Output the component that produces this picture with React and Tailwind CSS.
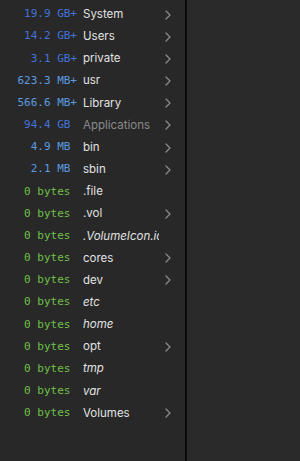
import React from 'react';

const rows = [
    { size: '19.9 GB+', color: 'text-[#4274dc]', name: 'System', dir: true },
    { size: '14.2 GB+', color: 'text-[#4274dc]', name: 'Users', dir: true },
    { size: '3.1 GB+', color: 'text-[#4274dc]', name: 'private', dir: true },
    { size: '623.3 MB+', color: 'text-[#5b9be0]', name: 'usr', dir: true },
    { size: '566.6 MB+', color: 'text-[#5b9be0]', name: 'Library', dir: true },
    { size: '94.4 GB ', color: 'text-[#4274dc]', name: 'Applications', dir: true, dim: true },
    { size: '4.9 MB ', color: 'text-[#5b9be0]', name: 'bin', dir: true },
    { size: '2.1 MB ', color: 'text-[#5b9be0]', name: 'sbin', dir: true },
    { size: '0 bytes ', color: 'text-[#70c048]', name: '.file' },
    { size: '0 bytes ', color: 'text-[#70c048]', name: '.vol', dir: true },
    { size: '0 bytes ', color: 'text-[#70c048]', name: '.VolumeIcon.icns', link: true },
    { size: '0 bytes ', color: 'text-[#70c048]', name: 'cores', dir: true },
    { size: '0 bytes ', color: 'text-[#70c048]', name: 'dev', dir: true },
    { size: '0 bytes ', color: 'text-[#70c048]', name: 'etc', link: true },
    { size: '0 bytes ', color: 'text-[#70c048]', name: 'home', link: true },
    { size: '0 bytes ', color: 'text-[#70c048]', name: 'opt', dir: true },
    { size: '0 bytes ', color: 'text-[#70c048]', name: 'tmp', link: true },
    { size: '0 bytes ', color: 'text-[#70c048]', name: 'var', link: true },
    { size: '0 bytes ', color: 'text-[#70c048]', name: 'Volumes', dir: true },
];

const Chevron = () => (
    <svg width="6" height="10" viewBox="0 0 6 10" fill="none">
        <path d="M1 1l4 4-4 4" stroke="#8c8c8c" strokeWidth="1.2" strokeLinecap="round" strokeLinejoin="round" />
    </svg>
);

export default function App() {
    return (
        <div className="flex w-[300px] h-[461px] bg-[#282828] overflow-hidden">
            {/* Column listing */}
            <div className="w-[185px] pt-[3.5px]">
                {rows.map((r) => (
                    <div key={r.name} className="flex items-center h-[22.17px]">
                        <span
                            className={`w-[77px] text-right whitespace-pre text-[11px] font-['DejaVu_Sans_Mono',monospace] ${r.color}`}
                        >
                            {r.size}
                        </span>
                        <span
                            className={`ml-[6px] w-[76px] overflow-hidden whitespace-nowrap text-[11.5px] font-['Inter',sans-serif] ${
                                r.dim ? 'text-[#8a8a8a]' : 'text-[#e2e2e2]'
                            } ${r.link ? 'italic' : ''}`}
                        >
                            {r.name}
                        </span>
                        <span className="ml-[6px] w-[8px] flex items-center">{r.dir && <Chevron />}</span>
                    </div>
                ))}
            </div>
            <div className="w-[1.5px] bg-[#0b0b0b]" />
            <div className="flex-1 bg-[#2a2a2a]" />
        </div>
    );
}
